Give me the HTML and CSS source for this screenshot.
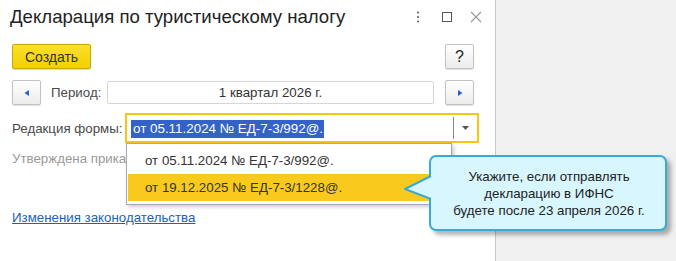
FILE: index.html
```html
<!DOCTYPE html>
<html lang="ru">
<head>
<meta charset="utf-8">
<link rel="stylesheet" href="styles.css">
</head>
<body>
<div class="page">
  <div class="dialog">
    <div class="titlebar">
      <div class="title">Декларация по туристическому налогу</div>
      <div class="wincontrols">
        <svg class="wc" width="14" height="14" viewBox="0 0 14 14"><circle cx="7" cy="2.5" r="1.1" fill="#666"/><circle cx="7" cy="7" r="1.1" fill="#666"/><circle cx="7" cy="11.5" r="1.1" fill="#666"/></svg>
        <svg class="wc" width="14" height="14" viewBox="0 0 14 14"><rect x="2.5" y="2.5" width="9" height="9" fill="none" stroke="#555" stroke-width="1"/></svg>
        <svg class="wc" width="14" height="14" viewBox="0 0 14 14"><path d="M2 2 L12 12 M12 2 L2 12" stroke="#999" stroke-width="1.1"/></svg>
      </div>
    </div>
    <div class="toolbar">
      <button class="btn-create">Создать</button>
      <button class="btn-help">?</button>
    </div>
    <div class="row period-row">
      <button class="btn-arrow"><svg width="8" height="8" viewBox="0 0 8 8"><path d="M6 1 L1.5 4 L6 7 Z" fill="#2a62c9"/></svg></button>
      <span class="label">Период:</span>
      <div class="period-field">1 квартал 2026 г.</div>
      <button class="btn-arrow"><svg width="8" height="8" viewBox="0 0 8 8"><path d="M2 1 L6.5 4 L2 7 Z" fill="#2a62c9"/></svg></button>
    </div>
    <div class="row form-row">
      <span class="label">Редакция формы:</span>
      <div class="select">
        <span class="select-value"><span class="sel">от 05.11.2024 № ЕД-7-3/992@.</span></span>
        <span class="select-btn"><svg width="7" height="4" viewBox="0 0 7 4"><path d="M0 0 H7 L3.5 4 Z" fill="#555"/></svg></span>
      </div>
    </div>
    <div class="approved">Утверждена прика</div>
    <a class="law-link" href="#">Изменения законодательства</a>
  </div>
  <div class="side"></div>

  <div class="dropdown">
    <div class="dd-item">от 05.11.2024 № ЕД-7-3/992@.</div>
    <div class="dd-item active">от 19.12.2025 № ЕД-7-3/1228@.</div>
  </div>

  <div class="callout">
    <svg class="callout-tail" width="30" height="34" viewBox="0 0 30 34"><path d="M27 4 L1 17 L27 27" fill="#d8f6fd" stroke="#3aaad4" stroke-width="2" stroke-linejoin="round"/></svg>
    <div class="callout-text">Укажите, если отправлять<br>декларацию в ИФНС<br>будете после 23 апреля 2026 г.</div>
  </div>
</div>
</body>
</html>
```
FILE: styles.css
```css
* { box-sizing: border-box; }
html, body { margin: 0; padding: 0; }
body {
  font-family: "Liberation Sans", Arial, sans-serif;
  font-size: 13.3px;
  color: #333;
  background: #f0f0f0;
}
.page {
  position: relative;
  display: flex;
  width: 676px;
  height: 261px;
  overflow: hidden;
}
.dialog {
  width: 496px;
  height: 261px;
  background: #fff;
  border-right: 1px solid #c8c8c8;
  display: flex;
  flex-direction: column;
}
.side { flex: 1; background: #f0f0f0; }

.titlebar {
  display: flex;
  align-items: center;
  justify-content: space-between;
  height: 36px;
  padding: 0 12px 0 10px;
}
.title {
  font-size: 18.6px;
  color: #222;
  margin-top: -2px;
}
.wincontrols { display: flex; gap: 15px; margin-top: -2px; }
.wc { display: block; }

.toolbar {
  display: flex;
  justify-content: space-between;
  padding: 8px 21px 0 12px;
}
button { font-family: inherit; cursor: default; }
.btn-create {
  width: 79px;
  height: 25px;
  background: linear-gradient(#fbe02a, #f3d000);
  border: 1px solid #c9a800;
  border-radius: 2px;
  font-size: 14px;
  color: #333;
  padding: 0;
  box-shadow: 0 1px 1px rgba(0,0,0,0.15);
}
.btn-help, .btn-arrow {
  width: 29px;
  height: 25px;
  background: linear-gradient(#ffffff, #ececec);
  border: 1px solid #c2c2c2;
  border-radius: 2px;
  padding: 0;
  font-size: 16px;
  color: #222;
  display: flex;
  align-items: center;
  justify-content: center;
  box-shadow: 0 1px 1px rgba(0,0,0,0.12);
}

.row { display: flex; align-items: center; }
.period-row {
  padding: 11px 21px 0 12px;
  height: 36px;
}
.label { color: #4a4a4a; }
.period-row .label { margin-left: 10px; width: 56px; }
.period-field {
  width: 327px;
  height: 23px;
  margin-right: 11px;
  border: 1px solid #d6d6d6;
  border-radius: 2px;
  display: flex;
  align-items: center;
  justify-content: center;
  color: #333;
}

.form-row {
  padding: 8px 0 0 12px;
  height: 38px;
}
.form-row .label { width: 113px; }
.select {
  width: 354px;
  height: 30px;
  border: 2px solid #f6c615;
  display: flex;
  align-items: center;
  background: #fff;
}
.select-value { flex: 1; padding-left: 4px; }
.sel {
  background: #3363c9;
  color: #fff;
  font-size: 13.4px;
  padding: 1px 1px 2px 2px;
}
.select-btn {
  width: 24px;
  height: 22px;
  border-left: 1px solid #8a8a8a;
  display: flex;
  align-items: center;
  justify-content: center;
}

.approved {
  padding: 8px 0 0 12px;
  height: 26px;
  white-space: nowrap;
  color: #9a9a9a;
}
.law-link {
  margin: 41px 0 0 12px;
  color: #2460b3;
  text-decoration: underline;
  align-self: flex-start;
}

.dropdown {
  position: absolute;
  left: 126px;
  top: 143px;
  width: 326px;
  height: 62px;
  background: #fff;
  border: 1px solid #a8a8a8;
  box-shadow: 2px 2px 4px rgba(0,0,0,0.2);
  padding: 3px 1px;
}
.dd-item {
  height: 27px;
  padding-left: 17px;
  display: flex;
  align-items: center;
  color: #333;
}
.dd-item.active { background: #f8ca1e; }

.callout {
  position: absolute;
  left: 429px;
  top: 155px;
  width: 238px;
  height: 76px;
  background: #d8f6fd;
  border: 2px solid #3aaad4;
  border-radius: 7px;
  box-shadow: 4px 4px 4px rgba(0,0,0,0.3);
  display: flex;
  align-items: center;
  justify-content: center;
}
.callout-tail {
  position: absolute;
  left: -27px;
  top: 15px;
}
.callout-text {
  text-align: center;
  line-height: 17px;
  color: #222;
  padding-left: 2px;
}
```
